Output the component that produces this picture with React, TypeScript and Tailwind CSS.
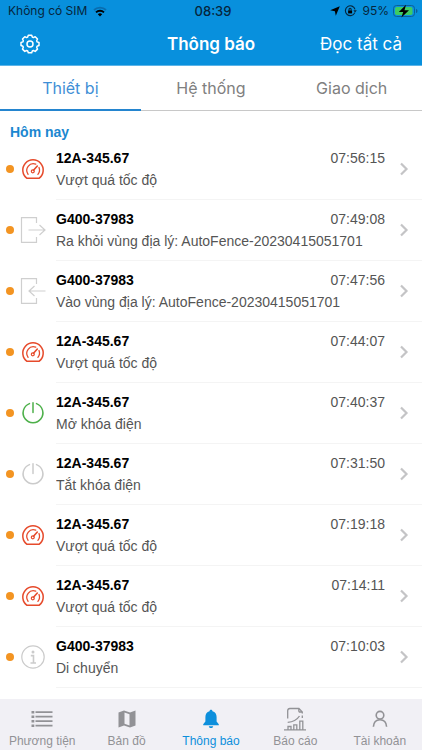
import React, { useState } from "react";

type IconType = "speed" | "out" | "in" | "on" | "off" | "info";

interface INotice {
  name: string;
  message: string;
  time: string;
  icon: IconType;
}

const notices: INotice[] = [
  { name: "12A-345.67", message: "Vượt quá tốc độ", time: "07:56:15", icon: "speed" },
  { name: "G400-37983", message: "Ra khỏi vùng địa lý: AutoFence-20230415051701", time: "07:49:08", icon: "out" },
  { name: "G400-37983", message: "Vào vùng địa lý: AutoFence-20230415051701", time: "07:47:56", icon: "in" },
  { name: "12A-345.67", message: "Vượt quá tốc độ", time: "07:44:07", icon: "speed" },
  { name: "12A-345.67", message: "Mở khóa điện", time: "07:40:37", icon: "on" },
  { name: "12A-345.67", message: "Tắt khóa điện", time: "07:31:50", icon: "off" },
  { name: "12A-345.67", message: "Vượt quá tốc độ", time: "07:19:18", icon: "speed" },
  { name: "12A-345.67", message: "Vượt quá tốc độ", time: "07:14:11", icon: "speed" },
  { name: "G400-37983", message: "Di chuyển", time: "07:10:03", icon: "info" },
];

const tabs = ["Thiết bị", "Hệ thống", "Giao dịch"];

const StatusBar = () => (
  <div className="grid h-[22px] grid-cols-[1fr_auto_1fr] items-center pl-2 pr-1 text-[13px] leading-4 text-[#06263c]">
    <div className="flex items-center gap-1.5 text-xs">
      <span>Không có SIM</span>
      <svg width="14" height="11" viewBox="0 0 14 11" fill="none">
        <path d="M1 4a8.6 8.6 0 0 1 12 0" stroke="#0a6daf" strokeWidth="1.8" />
        <path d="M3 6.4a5.7 5.7 0 0 1 8 0" stroke="#000" strokeWidth="1.9" />
        <path d="M4.8 8.2a3.2 3.2 0 0 1 4.4 0L7 10.6z" fill="#000" />
      </svg>
    </div>
    <span className="font-medium">08:39</span>
    <div className="flex items-center justify-end gap-1 text-xs">
      <svg width="10" height="10" viewBox="0 0 10 10" fill="#000">
        <path d="M9.8.2 5.8 9.8 4.9 5.2.2 4.3z" />
      </svg>
      <svg width="14" height="12" viewBox="0 0 14 12" fill="none" stroke="#06263c" strokeWidth="1.1">
        <path d="M10.8 7.6A4.9 4.9 0 1 1 11 4.4" />
        <path d="M9.4 5.2h3.4L11.1 7.6z" fill="#06263c" stroke="none" />
        <path d="M4.1 5.4h4v3h-4z" fill="#000" stroke="none" />
        <path d="M5 5.4V4.5a1.1 1.1 0 0 1 2.2 0v.9" />
      </svg>
      <span>95%</span>
      <svg width="25" height="14" viewBox="0 0 25 14" fill="none">
        <rect x=".5" y="1.5" width="21" height="11" rx="3" stroke="#0b5f98" />
        <rect x="2" y="3" width="17.500" height="8" rx="1.800" fill="#3ecb62" />
        <path d="M23 5v4c1.200-.4 1.500-1.200 1.500-2S24.200 5.400 23 5z" fill="#0b5f98" />
        <path d="M13 .8 5.800 8h4.400L8.400 13.500 16 6.200h-4.500z" fill="#000" />
      </svg>
    </div>
  </div>
);

const GearIcon = () => (
  <svg width="20" height="20" viewBox="0 0 20 20" fill="none" stroke="currentColor" strokeWidth="1.5" strokeLinejoin="round">
    <path d="M8.300 1.200h3.400l.6 1.900 1.100.5 1.800-.9 2.300 2.300-.8 1.800.4 1.100 1.900.6v3l-1.900.7-.4 1.100.8 1.800-2.300 2.300-1.800-.9-1.100.5-.6 1.800H8.300L7.700 17l-1.100-.5-1.800.9-2.300-2.300.8-1.800-.4-1.100L1 11.500v-3l1.900-.6.4-1.100L2.500 5l2.300-2.300 1.800.9 1.100-.5z" />
    <circle cx="10" cy="10" r="3" />
  </svg>
);

const NoticeIcon = ({ type }: { type: IconType }) => {
  if (type === "speed")
    return (
      <svg width="24" height="24" viewBox="0 0 24 24" fill="none" stroke="#e64a2b" strokeLinecap="round" strokeLinejoin="round">
        <path d="M6 21.300a10.200 10.200 0 1 1 12 0z" strokeWidth="1.500" />
        <path d="M7.100 17.300A6.600 6.600 0 0 1 14.700 7.200M18 10.500a6.600 6.600 0 0 1-1.100 6.800" strokeWidth="1.300" />
        <path d="m16.300 9-3.800 4.300" strokeWidth="1.600" />
        <circle cx="11.800" cy="14.300" r="1.500" strokeWidth="1.200" />
      </svg>
    );
  if (type === "out" || type === "in")
    return (
      <svg width="26" height="26" viewBox="0 0 26 26" fill="none" stroke="#cfcfcf" strokeWidth="1.200">
        <path d="M16.500 6V.7h-15v24.600h15V20" />
        {type === "out" ? <path d="M8.500 13H25M19.500 8l5.500 5-5.500 5" /> : <path d="M25.500 13H9M14.500 8 9 13l5.500 5" />}
      </svg>
    );
  if (type === "info")
    return (
      <svg width="24" height="24" viewBox="0 0 24 24" fill="none" stroke="#cbcbcb">
        <circle cx="12" cy="12" r="11.200" strokeWidth="1.200" />
        <circle cx="12" cy="7" r="1.500" fill="#cbcbcb" stroke="none" />
        <path d="M9.800 10.600h2.700v7.200M9.500 18h5.500" strokeWidth="1.600" />
      </svg>
    );
  return (
    <svg width="24" height="24" viewBox="0 0 24 24" fill="none" stroke={type === "on" ? "#4db04a" : "#cbcbcb"} strokeWidth="1.500" strokeLinecap="round">
      <path d="M8.500 2.600a9.900 9.900 0 1 0 7 0M12 1.800v9.800" />
    </svg>
  );
};

const NoticeRow = ({ name, message, time, icon }: INotice) => (
  <li>
    <button className="flex h-[61px] w-full items-center pl-1.5 text-left">
      <span className="mb-0.5 size-2 shrink-0 rounded-full bg-[#f39422]"></span>
      <span className="mx-1.5 mb-0.5 flex w-[26px] shrink-0 justify-center">
        <NoticeIcon type={icon} />
      </span>
      <span className="ml-1 flex h-full min-w-0 flex-1 items-center border-b border-[#f4f4f4]">
        <span className="min-w-0 flex-1">
          <span className="flex justify-between leading-[22px]">
            <strong className="font-bold text-black">{name}</strong>
            <span className="text-[#555]">{time}</span>
          </span>
          <span className="block truncate leading-[22px] text-[#555]">{message}</span>
        </span>
        <svg className="ml-3.5 mr-3 shrink-0" width="11" height="14" viewBox="0 0 11 14" fill="none" stroke="#c4c4c6" strokeWidth="2.200">
          <path d="m2 1.500 5.500 5.500L2 12.500" />
        </svg>
      </span>
    </button>
  </li>
);

const ListIcon = () => (
  <svg width="22" height="18" viewBox="0 0 22 18" fill="currentColor">
    {[1, 5.5, 10, 14.5].map((y) => (
      <path key={y} d={`M.5 ${y}h2.800v2.400H.5zM4.500 ${y + 0.3}h17v1.700h-17z`} />
    ))}
  </svg>
);

const MapIcon = () => (
  <svg width="18" height="18" viewBox="0 0 18 18" fill="currentColor" fillRule="evenodd">
    <path d="M.5 2.500 6 .5l6 2L17.500.4v15.100L12 17.500l-6-2-5.500 2zM6.500 2.600v11.200l5 1.700V4.200z" />
  </svg>
);

const BellIcon = () => (
  <svg width="18" height="20" viewBox="0 0 18 20" fill="currentColor">
    <path d="M9 .8c.9 0 1.500.6 1.500 1.500 2.700.7 4.100 3 4.100 5.700v4.500l2.200 2.800v1H1.200v-1l2.200-2.800V8c0-2.700 1.400-5 4.100-5.700C7.500 1.400 8.100.8 9 .8zM6.800 17.200h4.400c-.2 1.200-1.100 1.900-2.200 1.900s-2-.7-2.200-1.900z" />
  </svg>
);

const ReportIcon = () => (
  <svg width="22" height="24" viewBox="0 0 22 24" fill="none" stroke="currentColor" strokeWidth="1.300">
    <path d="M3.700 11.500V3.700c0-1.400.8-2.200 2.200-2.200h9l3.400 3.400v1.600M14.800 1.500v2.200c0 .9.400 1.300 1.300 1.300h2.200M18.300 8.500v2.500" />
    <path d="M3.700 15.300C9 15 13 12.800 15.500 9" />
    <path d="M0 22.800h22M4 22.800v-3.300h3v3.300M9.800 22.800v-5h3v5M15.800 22.800v-8.600h3v8.600" />
  </svg>
);

const UserIcon = () => (
  <svg width="16" height="18" viewBox="0 0 16 18" fill="none" stroke="currentColor" strokeWidth="1.600">
    <circle cx="8" cy="5.200" r="3.800" />
    <path d="M1.400 16.800c.3-4.400 2.600-7 6.600-7s6.300 2.600 6.600 7" />
  </svg>
);

const navItems = [
  { label: "Phương tiện", Icon: ListIcon },
  { label: "Bản đồ", Icon: MapIcon },
  { label: "Thông báo", Icon: BellIcon },
  { label: "Báo cáo", Icon: ReportIcon },
  { label: "Tài khoản", Icon: UserIcon },
];

const App = () => {
  const [activeTab, setActiveTab] = useState<string>("Thiết bị");
  const [activeNav, setActiveNav] = useState<string>("Thông báo");

  return (
    <div className="flex min-h-screen flex-col bg-white font-['Inter',sans-serif]">
      <header className="h-[66px] border-b border-[#5cb4e8] bg-[#0890dd]">
        <StatusBar />
        <div className="grid h-11 grid-cols-[1fr_auto_1fr] items-center px-5 text-white">
          <button aria-label="Cài đặt" className="justify-self-start">
            <GearIcon />
          </button>
          <h1 className="text-[17px] font-semibold leading-6">Thông báo</h1>
          <button className="justify-self-end text-[17px] leading-6">Đọc tất cả</button>
        </div>
      </header>

      <div className="grid h-[45px] grid-cols-3">
        {tabs.map((tab) => (
          <button
            key={tab}
            onClick={() => setActiveTab(tab)}
            className={
              tab === activeTab
                ? "border-b-2 border-[#2485cf] text-base text-[#3f8fd6]"
                : "border-b border-[#c8c8c8] text-base text-[#808080]"
            }
          >
            {tab}
          </button>
        ))}
      </div>

      <main className="flex-1 font-['Liberation_Sans',sans-serif] text-sm">
        <h2 className="h-7 pl-2.5 pt-3 font-bold leading-[18px] text-[#1b87d0]">Hôm nay</h2>
        <ul>
          {notices.map((notice) => (
            <NoticeRow key={notice.time} {...notice} />
          ))}
        </ul>
      </main>

      <nav className="grid h-[51px] grid-cols-5 bg-[#f1f0f5] font-['Liberation_Sans',sans-serif] text-xs leading-4">
        {navItems.map(({ label, Icon }) => (
          <button
            key={label}
            onClick={() => setActiveNav(label)}
            className={
              label === activeNav
                ? "flex flex-col items-center whitespace-nowrap pt-1.5 text-[#0d8fdc]"
                : "flex flex-col items-center whitespace-nowrap pt-1.5 text-[#929296]"
            }
          >
            <span className="flex h-7 items-center">
              <Icon />
            </span>
            {label}
          </button>
        ))}
      </nav>
    </div>
  );
};

export default App;
